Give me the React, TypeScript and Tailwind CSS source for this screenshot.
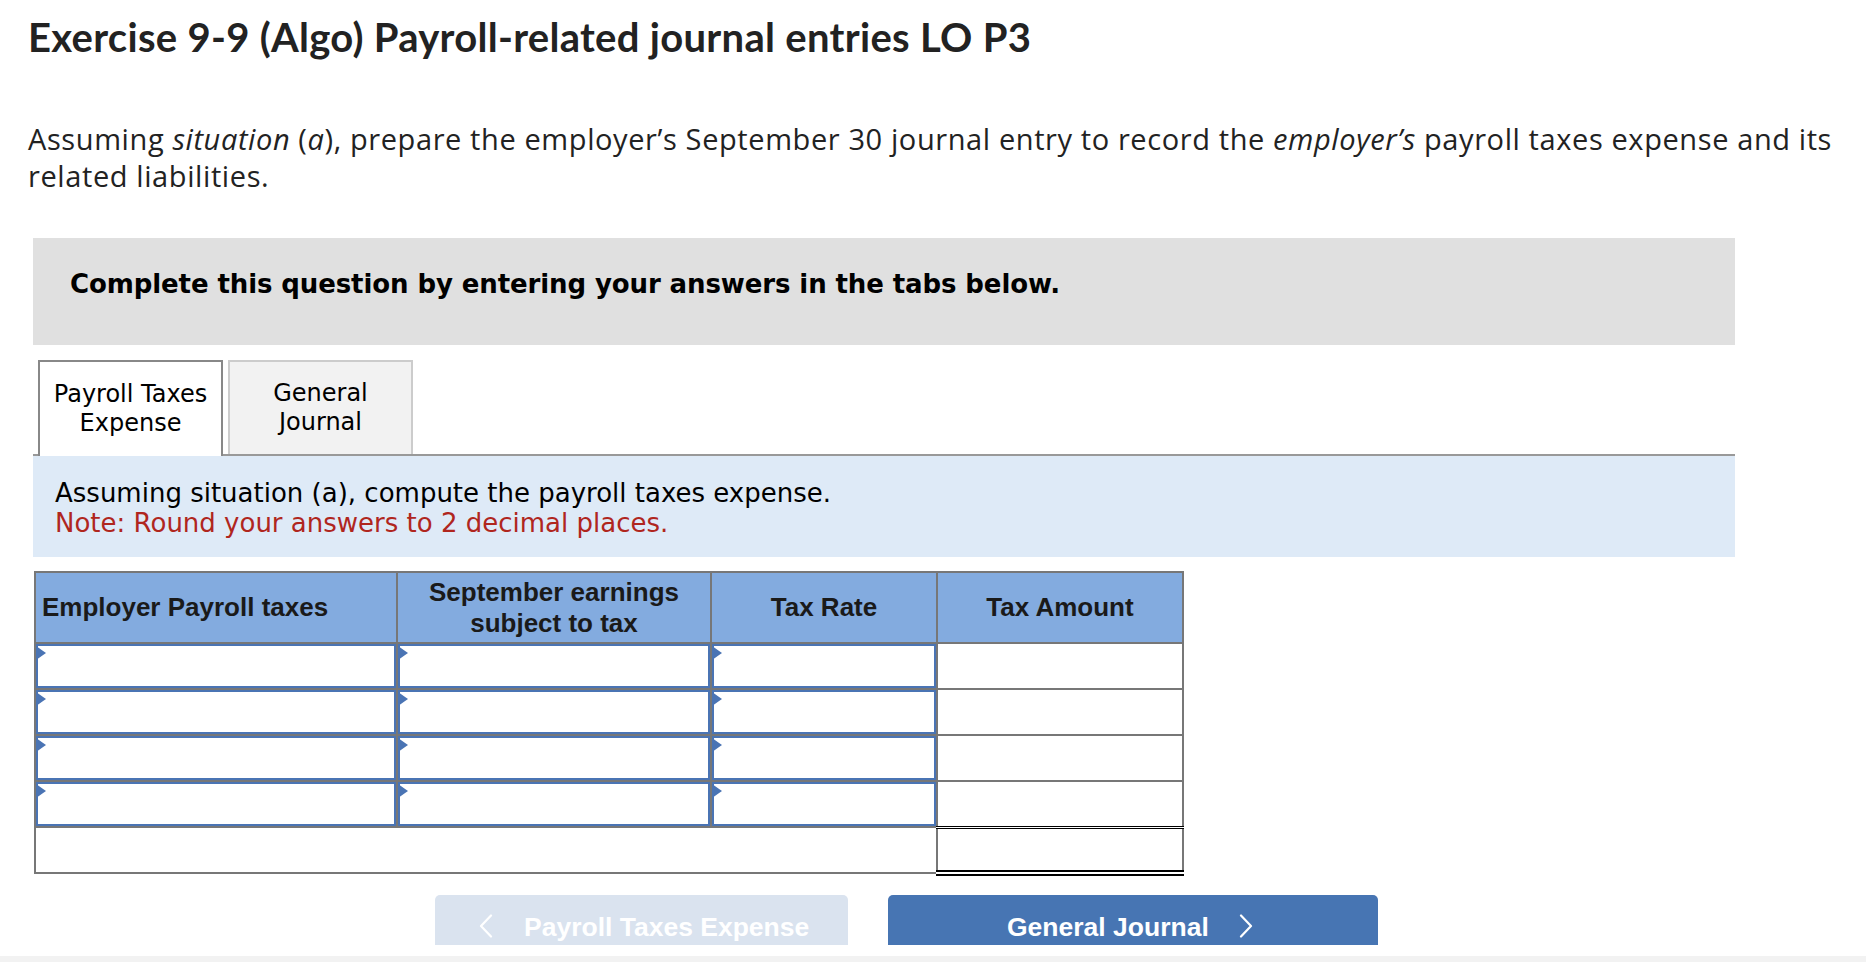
import React from "react";

const InputCell = () => (
  <td className="border-2 border-[#777777] p-0 h-[46px]">
    <div className="relative h-full w-full border-2 border-[#4a74b4] bg-white">
      <div className="absolute -left-[2px] top-0 w-0 h-0 border-y-[7px] border-y-transparent border-l-[10px] border-l-[#4a74b4]" />
    </div>
  </td>
);

const Chevron = ({ dir }: { dir: "left" | "right" }) => (
  <svg width="14" height="24" viewBox="0 0 14 24" className="shrink-0 block">
    {dir === "left" ? (
      <polyline points="12,1.5 2,12 12,22.5" fill="none" stroke="white" strokeWidth="2.2" strokeLinecap="round" strokeLinejoin="round" />
    ) : (
      <polyline points="2,1.5 12,12 2,22.5" fill="none" stroke="white" strokeWidth="2.2" strokeLinecap="round" strokeLinejoin="round" />
    )}
  </svg>
);

export default function App() {
  const rows = [0, 1, 2, 3];
  return (
    <div className="w-[1866px] h-[962px] bg-white overflow-hidden flex flex-col text-[#222222]">
      <div className="pl-[28px] pt-[13px]">
        <h1 className="text-[40px] leading-[48px] font-bold font-['Lato',sans-serif] tracking-[0.3px] text-[#222222] whitespace-nowrap">
          Exercise 9-9 (Algo) Payroll-related journal entries LO P3
        </h1>
        <p className="mt-[59px] text-[29px] leading-[37px] font-['Open_Sans',sans-serif] tracking-[0.6px] text-[#222222] whitespace-nowrap">
          Assuming <i>situation</i> (<i>a</i>), prepare the employer’s September 30 journal entry to record the <i>employer’s</i> payroll taxes expense and its
          <br />
          related liabilities.
        </p>
      </div>

      <div className="ml-[33px] w-[1702px] mt-[44px]">
        <div className="h-[107px] bg-[#e0e0e0] pl-[37px] pt-[31px]">
          <p className="font-['DejaVu_Sans',sans-serif] font-bold text-[26px] leading-[30px] tracking-[-0.1px] text-black">
            Complete this question by entering your answers in the tabs below.
          </p>
        </div>

        <div className="mt-[15px] flex items-end gap-[5px] pl-[5px] border-b-2 border-[#999999] h-[96px]">
          <div className="w-[185px] h-[96px] -mb-[2px] bg-white border-2 border-b-0 border-[#888888] flex items-center justify-center text-center font-['DejaVu_Sans',sans-serif] text-[24px] leading-[29px] text-black">
            Payroll Taxes<br />Expense
          </div>
          <div className="w-[185px] h-[94px] bg-[#f2f2f2] border-2 border-b-0 border-[#cccccc] flex items-center justify-center text-center font-['DejaVu_Sans',sans-serif] text-[24px] leading-[29px] text-black">
            General<br />Journal
          </div>
        </div>

        <div className="h-[101px] bg-[#deeaf7] pl-[22px] pt-[22px] font-['DejaVu_Sans',sans-serif] text-[26px] leading-[30px]">
          <p className="text-black">Assuming situation (a), compute the payroll taxes expense.</p>
          <p className="text-[#b0261e]">Note: Round your answers to 2 decimal places.</p>
        </div>

        <table className="mt-[14px] ml-[1px] border-collapse border-2 border-[#777777] font-['Liberation_Sans',sans-serif]">
          <thead>
            <tr className="h-[71px] bg-[#83abdf]">
              <th className="w-[362px] border-2 border-[#777777] text-left pl-[6px] text-[26px] leading-[31px] font-bold text-[#1a1a1a]">
                Employer Payroll taxes
              </th>
              <th className="w-[314px] border-2 border-[#777777] text-center text-[26px] leading-[31px] font-bold text-[#1a1a1a]">
                September earnings<br />subject to tax
              </th>
              <th className="w-[226px] border-2 border-[#777777] text-center text-[26px] leading-[31px] font-bold text-[#1a1a1a]">
                Tax Rate
              </th>
              <th className="w-[246px] border-2 border-[#777777] text-center text-[26px] leading-[31px] font-bold text-[#1a1a1a]">
                Tax Amount
              </th>
            </tr>
          </thead>
          <tbody>
            {rows.map((r) => (
              <tr key={r} className="h-[46px]">
                <InputCell />
                <InputCell />
                <InputCell />
                <td className={r === 3 ? "border-2 border-[#777777] border-b-[3px] border-b-black bg-white" : "border-2 border-[#777777] bg-white"} />
              </tr>
            ))}
            <tr className="h-[46px]">
              <td colSpan={3} className="border-2 border-[#777777] bg-white" />
              <td className="border-2 border-[#777777] border-t-[3px] border-t-black border-b-[6px] border-b-black border-double bg-white" />
            </tr>
          </tbody>
        </table>
      </div>

      <div className="mt-[19px] h-[50px] overflow-hidden flex gap-[40px] pl-[435px] font-['Liberation_Sans',sans-serif]">
        <button className="w-[413px] h-[60px] rounded-t-[5px] bg-[#dae3ef] text-white font-bold text-[26.5px] flex items-start justify-start pt-[16px] pl-[44px] gap-[31px]">
          <span className="mt-[3px]"><Chevron dir="left" /></span>
          <span className="leading-[32px] whitespace-nowrap">Payroll Taxes Expense</span>
        </button>
        <button className="w-[490px] h-[60px] rounded-t-[5px] bg-[#4775b3] text-white font-bold text-[26.5px] flex items-start justify-start pt-[16px] pl-[119px] gap-[30px]">
          <span className="leading-[32px] whitespace-nowrap">General Journal</span>
          <span className="mt-[3px]"><Chevron dir="right" /></span>
        </button>
      </div>
      <div className="mt-[11px] h-[6px] bg-[#f2f2f2]" />
    </div>
  );
}
